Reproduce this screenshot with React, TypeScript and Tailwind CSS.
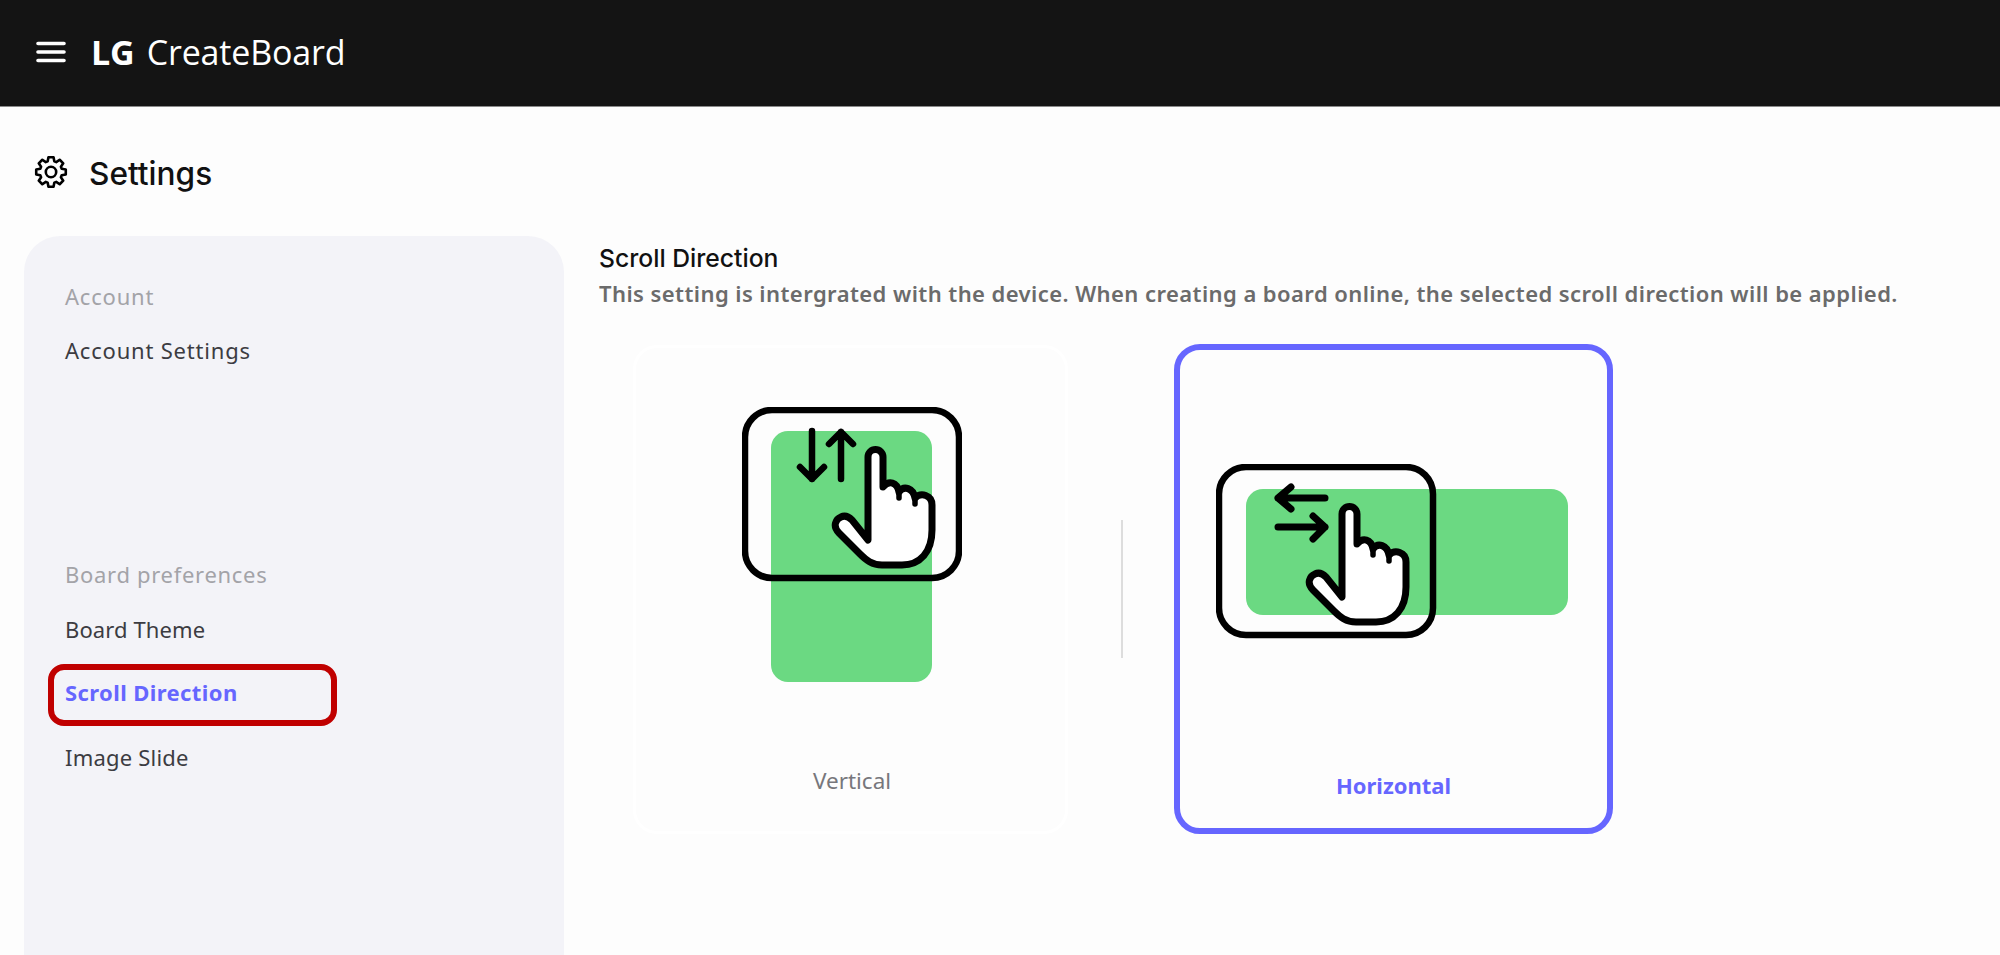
import React from 'react';

// 8 toothed gear outline, centred on 17,17
const gearPath = (() => {
  const pts: string[] = [];
  for (let i = 0; i < 8; i++) {
    const a = (i * Math.PI) / 4 - Math.PI / 2;
    const at = (r: number, d: number) =>
      `${(17 + r * Math.cos(a + d)).toFixed(2)} ${(17 + r * Math.sin(a + d)).toFixed(2)}`;
    pts.push(at(11.2, -0.3), at(15, -0.17), at(15, 0.17), at(11.2, 0.3));
  }
  return 'M' + pts.join(' L') + ' Z';
})();

const Hand: React.FC = () => (
  <g>
    <path
      d="M126 133 L126 50 A7.5 7.5 0 0 1 141 50 L141 80 C147 73 155 75 157 85 C162 78 171 81 173 91 C179 85 190 88 190 98 L190 123 C190 145 178 158 160 158 L140 158 C130 158 124 153 118 147 L97 126 C90 119 94 112 99 110 C103 108 107 110 110 113 L126 133 Z"
      fill="#ffffff"
      stroke="#000000"
      strokeWidth="7"
      strokeLinejoin="round"
    />
    <path d="M157 85 L157 91 M173 91 L173 97" fill="none" stroke="#000000" strokeWidth="5.5" strokeLinecap="round" />
  </g>
);

const Frame: React.FC = () => (
  <rect x="3" y="3" width="214" height="168" rx="27" fill="none" stroke="#000000" strokeWidth="6.5" />
);

const VerticalArt: React.FC = () => (
  <svg width="220" height="275" viewBox="0 0 220 275" className="block">
    <rect x="29" y="24" width="161" height="251" rx="17" fill="#6bd982" />
    <Frame />
    <path
      d="M70 24 L70 72 M58 60 L70 72 L82 60 M99 72 L99 25 M87 37 L99 25 L111 37"
      fill="none"
      stroke="#000000"
      strokeWidth="6.5"
      strokeLinecap="round"
      strokeLinejoin="round"
    />
    <Hand />
  </svg>
);

const HorizontalArt: React.FC = () => (
  <svg width="352" height="175" viewBox="0 0 352 175" className="block">
    <rect x="30" y="25" width="322" height="126" rx="17" fill="#6bd982" />
    <Frame />
    <path
      d="M109 34 L62 34 M75 23 L62 34 L75 45 M62 63 L109 63 M97 52 L109 63 L97 75"
      fill="none"
      stroke="#000000"
      strokeWidth="7"
      strokeLinecap="round"
      strokeLinejoin="round"
    />
    <Hand />
  </svg>
);

export default function App() {
  return (
    <div className="h-[955px] overflow-hidden bg-[#fdfdfd] font-['Noto_Sans',sans-serif]">
      <header className="flex h-[107px] items-center bg-[#141414] border-b border-[#8a8a8a] pl-9 pb-[2px]">
        <svg width="30" height="22" viewBox="0 0 30 22" className="block">
          <path d="M2 2.5 H28 M2 11 H28 M2 19.5 H28" stroke="#ffffff" strokeWidth="3.6" strokeLinecap="round" />
        </svg>
        <div className="ml-[25px] flex items-baseline text-white font-['Open_Sans',sans-serif] text-[34px] leading-none">
          <span className="font-bold tracking-[-0.1px]">LG</span>
          <span className="ml-[12px] font-medium tracking-[-0.15px]">CreateBoard</span>
        </div>
      </header>

      <div className="flex h-[129px] items-center pl-[34px]">
        <svg width="34" height="34" viewBox="0 0 34 34" className="block">
          <path d={gearPath} fill="none" stroke="#000000" strokeWidth="2.6" strokeLinejoin="round" />
          <circle cx="17" cy="17" r="5.2" fill="none" stroke="#000000" strokeWidth="2.6" />
        </svg>
        <h1 className="ml-[21px] mt-[4px] font-['Inter',sans-serif] text-[31.6px] font-medium leading-none text-[#111111]">Settings</h1>
      </div>

      <div className="flex">
        <aside className="ml-6 h-[720px] w-[540px] shrink-0 rounded-t-[36px] bg-[#f3f3f8] pl-[41px] pt-[45px] text-[22px] leading-[30px] tracking-[0.8px]">
          <div className="text-[#a3a3a8]">Account</div>
          <div className="mt-6 text-[#3c3c42]">Account Settings</div>
          <div className="mt-[194px] text-[#a3a3a8] tracking-[0.7px]">Board preferences</div>
          <div className="mt-[25px] text-[#3c3c42] tracking-[0.1px]">Board Theme</div>
          <div className="relative mt-[33px] font-bold tracking-[0.4px] text-[#6666ff]">
            Scroll Direction
            <span className="absolute -left-[17px] -top-[13px] h-[62px] w-[289px] rounded-[16px] border-[6px] border-[#c00000]" />
          </div>
          <div className="mt-[35px] text-[#3c3c42] tracking-[0.2px]">Image Slide</div>
        </aside>

        <main className="ml-[35px] min-w-0 flex-1">
          <h2 className="mt-[7px] font-['Inter',sans-serif] text-[24.7px] font-medium leading-[30px] text-[#111111]">Scroll Direction</h2>
          <p className="mt-[5px] whitespace-nowrap text-[22px] font-semibold leading-[30px] tracking-[0.43px] text-[#6b6b6b]">
            This setting is intergrated with the device. When creating a board online, the selected scroll direction will be applied.
          </p>

          <div className="mt-[36px] ml-[34px] flex items-start">
            <div className="mt-px flex h-[489px] w-[435px] flex-col rounded-[24px] border-[3px] border-white pl-[106px] pt-[59px]">
              <VerticalArt />
              <div className="mt-[84px] w-[220px] text-center text-[22.5px] leading-[30px] text-[#77777c]">Vertical</div>
            </div>
            <div className="ml-[53px] mt-[176px] h-[138px] w-[2px] bg-[#dddddd]" />
            <div className="ml-[51px] flex h-[490px] w-[439px] flex-col items-center rounded-[26px] border-[6px] border-[#6666ff] pt-[114px]">
              <div className="self-start ml-[36px]">
                <HorizontalArt />
              </div>
              <div className="mt-[131px] text-[22px] font-bold leading-[30px] text-[#6666ff]">Horizontal</div>
            </div>
          </div>
        </main>
      </div>
    </div>
  );
}
